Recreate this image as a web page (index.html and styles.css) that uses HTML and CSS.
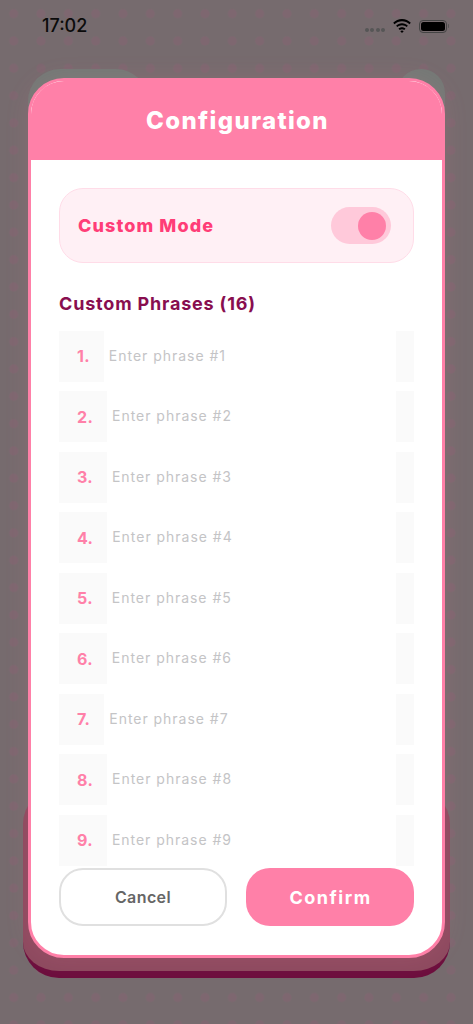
FILE: index.html
```html
<!DOCTYPE html>
<html lang="en">
<head>
<meta charset="utf-8">
<title>Configuration</title>
<link rel="stylesheet" href="styles.css">
</head>
<body>
<div class="screen">
  <svg class="dots" width="473" height="1024"><defs><pattern id="dot" width="27.33" height="27.33" patternUnits="userSpaceOnUse"><circle cx="13.67" cy="13.67" r="4.6" fill="#7e6770"/></pattern></defs><rect width="473" height="1024" fill="url(#dot)"/></svg>
  <div class="status">
    <span class="time">17:02</span>
    <div class="status-icons">
      <span class="signal"><i></i><i></i><i></i><i></i></span>
      <svg class="wifi" viewBox="0 0 18 14" width="18" height="14"><path d="M9 2.2c2.9 0 5.5 1.1 7.5 3l1.3-1.4C15.5 1.500 12.400 0 9 0S2.500 1.500.2 3.800l1.300 1.400c2-1.900 4.600-3 7.500-3z" fill="#000"/><path d="M9 6.300c1.800 0 3.400.7 4.600 1.800l1.300-1.400C13.400 5.200 11.300 4.200 9 4.200S4.600 5.200 3.100 6.700l1.300 1.400C5.600 7 7.200 6.300 9 6.300z" fill="#000"/><path d="M9 10.300c.9 0 1.600.3 2.200.8l1.300-1.400C11.600 8.900 10.400 8.300 9 8.300s-2.600.6-3.500 1.400l1.300 1.400c.6-.5 1.300-.8 2.200-.8zM9 14l1.700-1.800c-.5-.4-1.100-.6-1.700-.6s-1.200.2-1.700.6z" fill="#000"/></svg>
      <span class="battery"><span class="battery-fill"></span></span>
    </div>
  </div>
  <div class="modal-wrap">
    <div class="ghost ghost-left"></div>
    <div class="ghost ghost-right"></div>
    <div class="base"></div>
    <div class="modal">
      <header class="modal-head"><h1>Configuration</h1></header>
      <div class="modal-body">
        <div class="mode-panel">
          <span class="mode-label">Custom Mode</span>
          <span class="toggle"><span class="knob"></span></span>
        </div>
        <h2 class="phrases-title">Custom Phrases (16)</h2>
        <div class="list">
          <div class="row"><span class="num">1.</span><span class="ph">Enter phrase #1</span><span class="end"></span></div>
          <div class="row"><span class="num">2.</span><span class="ph">Enter phrase #2</span><span class="end"></span></div>
          <div class="row"><span class="num">3.</span><span class="ph">Enter phrase #3</span><span class="end"></span></div>
          <div class="row"><span class="num">4.</span><span class="ph">Enter phrase #4</span><span class="end"></span></div>
          <div class="row"><span class="num">5.</span><span class="ph">Enter phrase #5</span><span class="end"></span></div>
          <div class="row"><span class="num">6.</span><span class="ph">Enter phrase #6</span><span class="end"></span></div>
          <div class="row"><span class="num">7.</span><span class="ph">Enter phrase #7</span><span class="end"></span></div>
          <div class="row"><span class="num">8.</span><span class="ph">Enter phrase #8</span><span class="end"></span></div>
          <div class="row"><span class="num">9.</span><span class="ph">Enter phrase #9</span><span class="end"></span></div>
        </div>
        <div class="actions">
          <button class="btn btn-cancel">Cancel</button>
          <button class="btn btn-confirm">Confirm</button>
        </div>
      </div>
    </div>
  </div>
</div>
</body>
</html>
```

FILE: styles.css
```css
* { box-sizing: border-box; }
html, body { margin: 0; padding: 0; }
body { font-family: Inter, "Liberation Sans", sans-serif; background: #766b6e; }
.screen { width: 473px; height: 1024px; overflow: hidden; position: relative; background-color: #766b6e; }
.dots { position: absolute; left: 0; top: 0; display: block; }
.status { position: relative; height: 52px; display: flex; align-items: center; justify-content: space-between; padding: 0 26px 0 42px; }
.time { font-size: 18px; font-weight: 500; color: #0b0b0b; line-height: 1; }
.status-icons { display: flex; align-items: center; }
.signal { display: flex; gap: 1.500px; margin-right: 8px; margin-top: 8px; }
.signal i { width: 4px; height: 4px; border-radius: 50%; background: #565656; display: block; }
.wifi { margin-right: 8px; }
.battery { width: 28px; height: 13px; border: 1px solid #444; border-radius: 4px; padding: 1px; display: block; position: relative; }
.battery::after { content: ""; position: absolute; right: -3px; top: 3px; width: 1.5px; height: 4px; background: #555; border-radius: 0 1px 1px 0; }
.battery-fill { display: block; height: 100%; background: #000; border-radius: 2.5px; }
.modal-wrap { position: relative; margin: 26px 28px 0; width: 417px; height: 880px; }
.ghost { position: absolute; top: -9px; height: 70px; background: #747976; border-radius: 32px 32px 0 0; }
.ghost-left { left: 0; width: 120px; }
.ghost-right { right: 0; width: 48px; }
.base {
  position: absolute; left: -5px; right: -5px; bottom: -20px; height: 190px;
  background: #8d4a5f; border-bottom: 7px solid #6d0f3e; border-radius: 36px;
}
.modal {
  position: relative; height: 100%; border: 3px solid #ff80a8; border-radius: 36px;
  background: #fff; overflow: hidden; display: flex; flex-direction: column;
  box-shadow: 0 0 24px rgba(255, 128, 168, .12);
}
.modal-head { height: 79px; flex: none; background: #ff80a8; display: flex; align-items: center; justify-content: center; }
.modal-head h1 { margin: 0; padding-left: 2px; color: #fff; font-size: 24px; font-weight: 800; letter-spacing: 1.35px; }
.modal-body { flex: 1; min-height: 0; display: flex; flex-direction: column; padding: 28px 28px 29px; }
.mode-panel {
  height: 75px; flex: none; display: flex; align-items: center; justify-content: space-between;
  padding: 0 22px 0 18px; background: #fff0f5; border: 1.5px solid #ffdce8; border-radius: 24px;
}
.mode-label { font-size: 18px; font-weight: 800; color: #ff3d77; letter-spacing: 1.1px; }
.toggle { width: 60px; height: 37px; background: #ffc9da; border-radius: 19px; display: flex; align-items: center; justify-content: flex-end; padding-right: 5px; }
.knob { width: 28px; height: 28px; border-radius: 50%; background: #ff80a8; display: block; }
.phrases-title { margin: 29px 0 14.7px; font-size: 18px; font-weight: 700; line-height: 24px; color: #880e4f; letter-spacing: .82px; }
.list { flex: 1; min-height: 0; overflow: hidden; display: flex; flex-direction: column; gap: 9.5px; }
.row { height: 51px; flex: none; display: flex; align-items: center; }
.num { height: 100%; display: flex; align-items: center; padding: 0 14px 0 18px; background: #fafafa; color: #ff80a8; font-size: 16px; font-weight: 700; letter-spacing: .3px; }
.ph { flex: 1; padding: 0 0 2px 5px; font-size: 14px; color: #c4c4c6; letter-spacing: .97px; }
.end { width: 18px; height: 100%; background: #fafafa; }
.actions { flex: none; display: flex; justify-content: space-between; padding-top: 2px; }
.btn { width: 168px; height: 58px; border-radius: 24px; font-family: inherit; padding: 0; }
.btn-cancel { background: #fff; border: 2.5px solid #e0e0e0; color: #666; font-size: 16px; font-weight: 600; letter-spacing: .4px; }
.btn-confirm { background: #ff80a8; border: 0; color: #fff; font-size: 18px; font-weight: 700; letter-spacing: 1.5px; padding-left: 1px; }
```
